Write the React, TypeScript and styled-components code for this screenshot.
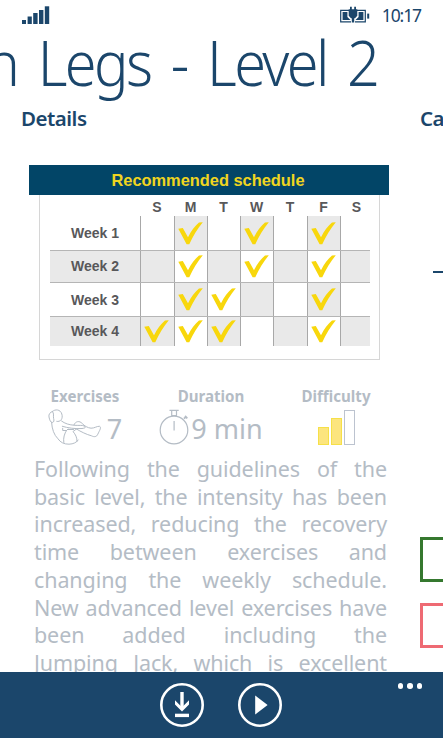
import React from "react";
import styled, { createGlobalStyle } from "styled-components";

const days = ["S", "M", "T", "W", "T", "F", "S"];

const weeks = [
  { name: "Week 1", height: 34, checked: [1, 3, 5] },
  { name: "Week 2", height: 32, checked: [1, 3, 5] },
  { name: "Week 3", height: 34, checked: [1, 2, 5] },
  { name: "Week 4", height: 30, checked: [0, 1, 2, 5] },
];

const description = [
  "Following the guidelines of the",
  "basic level, the intensity has been",
  "increased, reducing the recovery",
  "time between exercises and",
  "changing the weekly schedule.",
  "New advanced level exercises have",
  "been added including the",
  "Jumping Jack, which is excellent",
];

function SignalIcon() {
  return (
    <svg width="28" height="18" viewBox="0 0 28 18" fill="#1b466b">
      <rect x="0" y="14" width="4" height="4" />
      <rect x="5.6" y="10.5" width="4.2" height="7.5" />
      <rect x="11.2" y="7" width="4.4" height="11" />
      <rect x="17" y="4" width="4.4" height="14" />
      <rect x="22.8" y="0.3" width="4.4" height="17.7" />
    </svg>
  );
}

function BatteryIcon() {
  return (
    <svg width="30" height="17" viewBox="0 0 30 17" fill="none">
      <path
        d="M9 4.3H0.7V15.9H11M17 4.3H25.3V15.9H15"
        stroke="#1b466b"
        strokeWidth="1.2"
      />
      <path d="M2.6 6H7.4V11L10.5 14H2.6ZM23.4 6H18.6V11L15.5 14H23.4Z" fill="#1b466b" />
      <path
        d="M8.7 3.3H10V0.8H11.8V3.3H14.2V0.8H16V3.3H17.3V9.8L15 12.2H14.2V16.5H11.8V12.2H11L8.7 9.8Z"
        fill="#1b466b"
      />
      <rect x="27.2" y="7.6" width="2" height="5" fill="#1b466b" />
    </svg>
  );
}

function CheckIcon() {
  return (
    <svg width="25" height="23" viewBox="0 0 25 23">
      <path
        d="M0.3 6.8L4.8 6L10 15.2C13.3 8.8 17.2 3.6 21 0.6L24.8 0.2C19.6 6.6 15 13.7 11.3 22.3L8.6 22.3Z"
        fill="#f8d70c"
      />
    </svg>
  );
}

function CrunchIcon() {
  return (
    <svg
      width="54"
      height="36"
      viewBox="0 0 54 36"
      fill="none"
      stroke="#b4bcc5"
      strokeWidth="1"
      strokeLinejoin="round"
      strokeLinecap="round"
    >
      <path d="M4.5 2.5C7 -.2 12.5 .3 13.8 5C15.3 9.5 12.5 13.3 8.8 12.4" />
      <path d="M4.5 2.5C2.3 3 .3 5.3 1 8C1.6 11 2.6 13.5 4.3 13.5C6 13.2 6.3 11.5 5.6 9.5C5 7.5 6.4 4.5 4.5 2.5Z" />
      <path d="M3.6 13.5C4 20 6 26 10 29.8C12.5 33.5 16 35.2 21 35.2C25.5 35 28.5 33.5 30.2 31" />
      <path d="M13.5 12C17 14.7 21 15.9 27 16.3C31 16.6 34 16 36.2 17C38.5 18.2 37 19.3 34 19.5C27 20 20 19 14.3 17.3" />
      <path d="M26 15.8C27.5 12 31.5 11.5 34.2 14.5C36.5 17 39.5 18.8 43 19.2C46.5 19.3 49 17 51.5 17.3C53.8 18.3 51.5 21.5 49.8 25.2C48.7 28 46 28.2 43.5 26.8C38.5 25.5 33 22.8 28.5 20" />
      <path d="M14.7 19.3V21.5H18.5L20 20M18.5 21.5C16.5 24.5 15 29 15.8 33.5M28.5 20L25 22.5C27.5 25.5 29.2 28.5 29 32.5M19.5 20.5H25.5" />
    </svg>
  );
}

function StopwatchIcon() {
  return (
    <svg
      width="30"
      height="36"
      viewBox="0 0 30 36"
      fill="none"
      stroke="#b4bcc5"
      strokeWidth="1.2"
    >
      <circle cx="15" cy="21" r="13.8" />
      <path d="M10.5 1.3H19.7M12.7 1.5V6.5M17.5 1.5V6.5M12.2 6.5H18M15.1 12V21.5" />
      <path d="M24.9 9.7L27 7.8M26 7L28.3 9.3" strokeWidth="1.8" />
    </svg>
  );
}

function DifficultyIcon() {
  return (
    <svg width="37" height="35" viewBox="0 0 37 35" strokeWidth="1">
      <rect x="0.5" y="17.5" width="10" height="17" fill="#fce57e" stroke="#f6e048" />
      <rect x="13.5" y="8.5" width="10" height="26" fill="#fce57e" stroke="#f6e048" />
      <rect x="26.5" y="0.5" width="10" height="34" fill="none" stroke="#bcc3cf" />
    </svg>
  );
}

function DownloadIcon() {
  return (
    <svg width="44" height="44" viewBox="0 0 44 44" fill="none" stroke="#fff">
      <circle cx="22" cy="22" r="20.7" strokeWidth="2.6" />
      <path d="M22 9V26" strokeWidth="3.4" />
      <path d="M15 17.2V21.4L22 28.6L29 21.4V17.2L22 24.3Z" fill="#fff" stroke="none" />
      <path d="M15 32.4H29" strokeWidth="3.4" />
    </svg>
  );
}

function PlayIcon() {
  return (
    <svg width="44" height="44" viewBox="0 0 44 44" fill="none">
      <circle cx="22" cy="22" r="20.7" stroke="#fff" strokeWidth="2.6" />
      <path d="M17.2 12.6V31.6L29.6 22.1Z" fill="#fff" />
    </svg>
  );
}

function Schedule() {
  return (
    <ScheduleCard>
      <ScheduleTitle>Recommended schedule</ScheduleTitle>
      <ScheduleBody>
        <DayRow>
          <span />
          {days.map((day, i) => (
            <span key={i}>{day}</span>
          ))}
        </DayRow>
        {weeks.map((week, row) => (
          <WeekRow key={week.name} $height={week.height}>
            <WeekName $shaded={row % 2 === 1}>{week.name}</WeekName>
            {days.map((_, col) => (
              <DayCell key={col} $shaded={(row + col) % 2 === 1}>
                {week.checked.includes(col) && <CheckIcon />}
              </DayCell>
            ))}
          </WeekRow>
        ))}
      </ScheduleBody>
    </ScheduleCard>
  );
}

function App() {
  return (
    <Phone>
      <GlobalStyle />
      <StatusBar>
        <SignalIcon />
        <StatusRight>
          <BatteryIcon />
          <Clock>10:17</Clock>
        </StatusRight>
      </StatusBar>
      <Title>
        <span>n Legs - Level 2</span>
      </Title>
      <Panorama>
        <DetailsPanel>
          <PanelTitle>Details</PanelTitle>
          <Schedule />
          <Stats>
            <Stat>
              <StatLabel>Exercises</StatLabel>
              <StatValue $gap={5}>
                <CrunchIcon />
                <span>7</span>
              </StatValue>
            </Stat>
            <Stat>
              <StatLabel>Duration</StatLabel>
              <StatValue $gap={2}>
                <StopwatchIcon />
                <span>9 min</span>
              </StatValue>
            </Stat>
            <Stat>
              <StatLabel>Difficulty</StatLabel>
              <StatValue $gap={0}>
                <DifficultyIcon />
              </StatValue>
            </Stat>
          </Stats>
          <Description>
            {description.map((line) => (
              <Line key={line}>{line}</Line>
            ))}
          </Description>
        </DetailsPanel>
        <NextPanel>
          <PanelTitle>Ca</PanelTitle>
          <Divider />
          <Box $color="#35782f" />
          <Box $color="#ee6a73" />
        </NextPanel>
      </Panorama>
      <AppBar>
        <DownloadIcon />
        <PlayIcon />
        <More>
          <i />
          <i />
          <i />
        </More>
      </AppBar>
    </Phone>
  );
}
export default App;

const GlobalStyle = createGlobalStyle`
  * {
    box-sizing: border-box;
    margin: 0;
    padding: 0;
  }
  body {
    background-color: #fff;
    overflow: hidden;
  }
  svg {
    display: block;
    flex-shrink: 0;
  }
`;

const Phone = styled.div`
  display: flex;
  flex-direction: column;
  width: 443px;
  height: 738px;
  overflow: hidden;
  background-color: #fff;
  color: #1b466b;
  font-family: "Noto Sans", "Open Sans", sans-serif;
`;

const StatusBar = styled.header`
  display: flex;
  justify-content: space-between;
  height: 32px;
  padding: 6px 22px 0;
`;

const StatusRight = styled.div`
  display: flex;
  gap: 12px;
`;

const Clock = styled.span`
  font-size: 17.5px;
  line-height: 19px;
  letter-spacing: -1.1px;
`;

const Title = styled.h1`
  display: flex;
  justify-content: flex-end;
  height: 74px;
  padding-right: 66px;
  font-size: 62px;
  font-weight: 300;
  line-height: 61px;
  white-space: nowrap;
  letter-spacing: -2.8px;
  word-spacing: 8.6px;
  span {
    transform: scaleX(0.93);
    transform-origin: right center;
  }
`;

const Panorama = styled.main`
  display: flex;
  flex: 1;
  min-height: 0;
  overflow: hidden;
`;

const DetailsPanel = styled.section`
  flex: 0 0 420px;
`;

const NextPanel = styled.section`
  flex: 0 0 420px;
  > h2 {
    padding-left: 0;
  }
`;

const PanelTitle = styled.h2`
  height: 59px;
  padding-left: 21px;
  font-size: 20.5px;
  font-weight: 600;
  line-height: 24px;
  letter-spacing: -0.5px;
`;

const ScheduleCard = styled.div`
  width: 360px;
  margin-left: 29px;
  font-family: "Liberation Sans", Arial, sans-serif;
  font-weight: 700;
`;

const ScheduleTitle = styled.h3`
  height: 30px;
  padding-right: 2px;
  background-color: #024567;
  color: #f0d51f;
  font-size: 16.4px;
  line-height: 30px;
  text-align: center;
`;

const ScheduleBody = styled.div`
  height: 165px;
  margin: 0 9px 0 10px;
  padding: 0 9px 0 10px;
  border: 1px solid #d6d6d6;
  border-top: none;
  color: #58585a;
`;

const DayRow = styled.div`
  display: grid;
  grid-template-columns: 90px 34px 33px 33px 33px 34px 33px 33px;
  height: 21px;
  font-size: 14px;
  line-height: 25px;
  text-align: center;
`;

const WeekRow = styled.div<{ $height: number }>`
  display: grid;
  grid-template-columns: 90px 34px 33px 33px 33px 34px 33px 30px;
  height: ${({ $height }) => $height}px;
  & + & {
    border-top: 1px solid #b5b5b5;
  }
`;

const WeekName = styled.span<{ $shaded: boolean }>`
  display: flex;
  align-items: center;
  justify-content: center;
  padding-bottom: ${({ $shaded }) => ($shaded ? 2 : 0)}px;
  background-color: ${({ $shaded }) => ($shaded ? "#e9e9e9" : "#fff")};
  font-size: 14px;
`;

const DayCell = styled.span<{ $shaded: boolean }>`
  display: flex;
  align-items: center;
  justify-content: center;
  padding-right: 2px;
  border-left: 1px solid #a8a8a8;
  background-color: ${({ $shaded }) => ($shaded ? "#e9e9e9" : "#fff")};
`;

const Stats = styled.div`
  display: grid;
  grid-template-columns: 104px 148px 102px;
  margin: 27px 0 0 33px;
  color: #b4bcc5;
`;

const Stat = styled.div`
  display: flex;
  flex-direction: column;
  align-items: center;
`;

const StatLabel = styled.span`
  font-size: 15.1px;
  font-weight: 700;
  line-height: 18px;
`;

const StatValue = styled.div<{ $gap: number }>`
  display: flex;
  align-items: center;
  gap: ${({ $gap }) => $gap}px;
  height: 38px;
  margin-top: 3px;
  font-size: 27px;
  span {
    padding-top: 2px;
  }
`;

const Description = styled.div`
  width: 353px;
  margin: 9px 0 0 34px;
  color: #b4bcc5;
`;

const Line = styled.p`
  font-size: 21.5px;
  line-height: 27.7px;
  letter-spacing: -0.1px;
  text-align: justify;
  text-align-last: justify;
  white-space: nowrap;
`;

const Divider = styled.hr`
  height: 2px;
  margin: 106px 0 264px 13px;
  border: none;
  background-color: #1b466b;
`;

const Box = styled.div<{ $color: string }>`
  width: 200px;
  height: 45px;
  margin-bottom: 21px;
  border: 3px solid ${({ $color }) => $color};
`;

const AppBar = styled.footer`
  display: flex;
  gap: 34px;
  height: 66px;
  flex-shrink: 0;
  padding: 11px 21px 0 160px;
  background-color: #1b466b;
`;

const More = styled.div`
  display: flex;
  gap: 4px;
  margin-left: auto;
  i {
    width: 5.5px;
    height: 5.5px;
    border-radius: 50%;
    background-color: #fff;
  }
`;
